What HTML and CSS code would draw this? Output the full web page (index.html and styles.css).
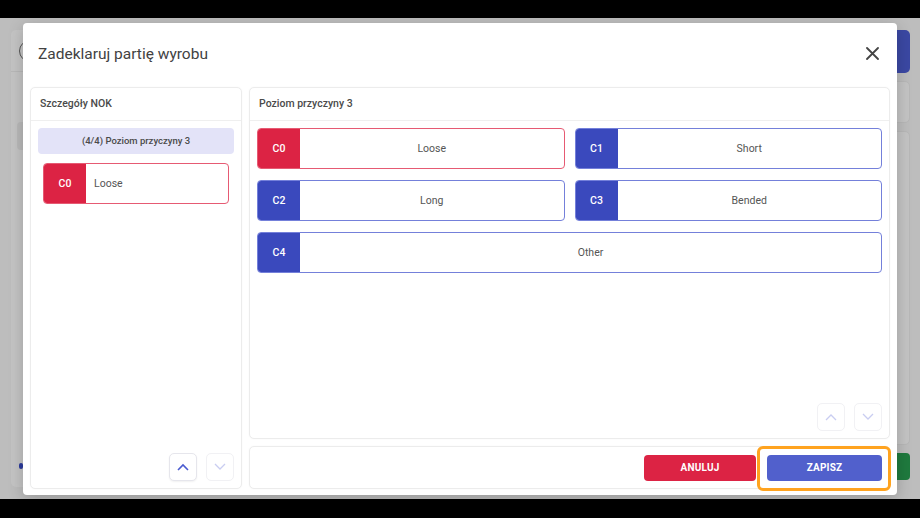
FILE: index.html
```html
<!DOCTYPE html>
<html lang="pl">
<head>
    <meta charset="UTF-8">
    <meta name="viewport" content="width=device-width, initial-scale=1.0">
    <title>Zadeklaruj partię wyrobu</title>
    <link rel="stylesheet" href="styles.css">
</head>
<body>
<div class="screen">

    <!-- aplikacja pod spodem (przyciemniona) -->
    <div class="app">
        <div class="app-left">
            <div class="app-head"><span class="app-circle"></span></div>
            <div class="app-chip"></div>
            <span class="app-dot"></span>
        </div>
        <div class="app-right">
            <div class="app-btn"></div>
            <div class="app-box small"></div>
            <div class="app-box big"></div>
            <div class="app-green"></div>
        </div>
    </div>

    <div class="modal">
        <div class="modal-header">
            <h1>Zadeklaruj partię wyrobu</h1>
            <button class="close-btn" aria-label="Zamknij">
                <svg width="13" height="13" viewBox="0 0 13 13"><path d="M1 1L12 12M12 1L1 12" stroke="#444" stroke-width="1.8" stroke-linecap="round"/></svg>
            </button>
        </div>

        <div class="modal-body">
            <div class="panel panel-left">
                <div class="panel-title">Szczegóły NOK</div>
                <div class="panel-content">
                    <div class="level-banner">(4/4) Poziom przyczyny 3</div>
                    <div class="cause selected left-align">
                        <span class="code">C0</span>
                        <span class="label">Loose</span>
                    </div>
                    <div class="arrows">
                        <button class="arrow active">
                            <svg width="12" height="8" viewBox="0 0 12 8"><polyline points="1,7 6,2 11,7" fill="none" stroke="#4a5bd0" stroke-width="1.6"/></svg>
                        </button>
                        <button class="arrow">
                            <svg width="12" height="8" viewBox="0 0 12 8"><polyline points="1,1 6,6 11,1" fill="none" stroke="#c9cdf1" stroke-width="1.3"/></svg>
                        </button>
                    </div>
                </div>
            </div>

            <div class="right-col">
                <div class="panel panel-right">
                    <div class="panel-title">Poziom przyczyny 3</div>
                    <div class="panel-content">
                        <div class="cause-grid">
                            <div class="cause selected"><span class="code">C0</span><span class="label">Loose</span></div>
                            <div class="cause"><span class="code">C1</span><span class="label">Short</span></div>
                            <div class="cause"><span class="code">C2</span><span class="label">Long</span></div>
                            <div class="cause"><span class="code">C3</span><span class="label">Bended</span></div>
                            <div class="cause wide"><span class="code">C4</span><span class="label">Other</span></div>
                        </div>
                        <div class="arrows">
                            <button class="arrow">
                                <svg width="12" height="8" viewBox="0 0 12 8"><polyline points="1,7 6,2 11,7" fill="none" stroke="#c9cdf1" stroke-width="1.3"/></svg>
                            </button>
                            <button class="arrow">
                                <svg width="12" height="8" viewBox="0 0 12 8"><polyline points="1,1 6,6 11,1" fill="none" stroke="#c9cdf1" stroke-width="1.3"/></svg>
                            </button>
                        </div>
                    </div>
                </div>

                <div class="panel footer">
                    <button class="btn btn-cancel">Anuluj</button>
                    <div class="save-wrap">
                        <button class="btn btn-save">Zapisz</button>
                        <span class="highlight"></span>
                    </div>
                </div>
            </div>
        </div>
    </div>
</div>
</body>
</html>
```

FILE: styles.css
```css
* {
    box-sizing: border-box;
}
html, body {
    margin: 0;
    padding: 0;
}
body {
    background: #000;
    font-family: Roboto, "Noto Sans", sans-serif;
    color: #444;
    height: 518px;
    padding-top: 18px;
    overflow: hidden;
}
button {
    font-family: inherit;
    border: none;
    background: none;
    padding: 0;
    cursor: pointer;
}

.screen {
    position: relative;
    height: 481px;
    background: #bdbdbd;
    overflow: hidden;
}

/* underlying page */
.app {
    display: flex;
    justify-content: space-between;
    height: 100%;
    padding: 12px 10px 12px 11px;
}
.app-left {
    position: relative;
    width: 300px;
    background: #c4c4c4;
    border-radius: 5px;
}
.app-head {
    height: 42px;
    border-bottom: 1px solid #b8b8b8;
    padding: 10px 8px;
}
.app-circle {
    display: block;
    width: 22px;
    height: 22px;
    border: 1.5px solid #555;
    border-radius: 50%;
}
.app-chip {
    margin: 50px 0 0 6px;
    width: 20px;
    height: 28px;
    background: #b9b9b9;
    border-radius: 4px;
}
.app-dot {
    position: absolute;
    left: 8px;
    bottom: 18px;
    width: 4px;
    height: 6px;
    background: #2b3a9c;
    border-radius: 2px;
}
.app-right {
    width: 200px;
    display: flex;
    flex-direction: column;
    gap: 8px;
}
.app-btn {
    height: 43px;
    background: #3b48a3;
    border-radius: 5px;
}
.app-box {
    background: #c4c4c4;
    border: 1px solid #b8b8b8;
    border-radius: 5px;
}
.app-box.small {
    height: 42px;
}
.app-box.big {
    flex: 1;
}
.app-green {
    height: 27px;
    background: #1f7a3e;
    border-radius: 4px;
    margin-bottom: 7px;
}

/* modal */
.modal {
    position: absolute;
    left: 23px;
    top: 5px;
    width: 874px;
    height: 472px;
    background: #fff;
    border-radius: 4px;
    box-shadow: 0 4px 16px rgba(0,0,0,0.2);
    display: flex;
    flex-direction: column;
    padding: 0 7px 6px 7px;
}
.modal-header {
    height: 64px;
    display: flex;
    align-items: center;
    justify-content: space-between;
    padding: 0 9px 3px 8px;
}
.modal-header h1 {
    margin: 0;
    font-size: 15.5px;
    font-weight: 400;
    color: #424242;
}
.close-btn {
    width: 18px;
    height: 18px;
    display: flex;
    align-items: center;
    justify-content: center;
}

.modal-body {
    flex: 1;
    display: grid;
    grid-template-columns: 212px 1fr;
    gap: 7px;
}
.panel {
    background: #fff;
    border: 1px solid #ececec;
    border-radius: 5px;
    box-shadow: 0 0 2px rgba(0,0,0,0.04);
}
.panel-left, .panel-right {
    display: flex;
    flex-direction: column;
}
.panel-title {
    height: 33px;
    line-height: 32px;
    padding-left: 9px;
    font-size: 10.5px;
    font-weight: 500;
    color: #4a4a4a;
    border-bottom: 1px solid #efefef;
}
.panel-content {
    flex: 1;
    display: flex;
    flex-direction: column;
    padding: 7px 7px 7px 7px;
}

.level-banner {
    height: 26px;
    line-height: 26px;
    background: #e3e3f8;
    border-radius: 4px;
    text-align: center;
    font-size: 9.5px;
    font-weight: 500;
    color: #4a4a4a;
    margin-bottom: 9px;
}
.panel-left .cause {
    margin: 0 5px;
}

.cause {
    height: 41px;
    display: flex;
    border: 1.5px solid #7480da;
    border-radius: 4px;
    overflow: hidden;
    background: #fff;
}
.cause .code {
    width: 42px;
    flex: none;
    background: #3a49bd;
    color: #fff;
    font-size: 10.5px;
    font-weight: 500;
    display: flex;
    align-items: center;
    justify-content: center;
}
.cause .label {
    flex: 1;
    display: flex;
    align-items: center;
    justify-content: center;
    font-size: 10.5px;
    color: #555;
}
.cause.selected {
    border-color: #e65a73;
}
.cause.selected .code {
    background: #dc2344;
}
.cause.left-align .label {
    justify-content: flex-start;
    padding-left: 8px;
}

.cause-grid {
    display: grid;
    grid-template-columns: 1fr 1fr;
    column-gap: 10px;
    row-gap: 11px;
}
.cause.wide {
    grid-column: span 2;
}

.arrows {
    margin-top: auto;
    display: flex;
    justify-content: flex-end;
    gap: 9px;
}
.arrow {
    width: 28px;
    height: 28px;
    border: 1px solid #f1f1f4;
    border-radius: 5px;
    display: flex;
    align-items: center;
    justify-content: center;
    background: #fff;
}
.arrow.active {
    border-color: #e6e6ec;
    box-shadow: 0 1px 2px rgba(0,0,0,0.06);
}

.right-col {
    display: grid;
    grid-template-rows: 1fr 43px;
    gap: 7px;
}
.footer {
    display: flex;
    justify-content: flex-end;
    align-items: center;
    gap: 11px;
    padding-right: 7px;
}
.btn {
    height: 26px;
    border-radius: 4px;
    color: #fff;
    font-size: 10px;
    font-weight: 700;
    text-transform: uppercase;
    letter-spacing: 0.2px;
}
.btn-cancel {
    width: 112px;
    background: #dc2344;
}
.save-wrap {
    position: relative;
}
.btn-save {
    width: 115px;
    background: #5160cc;
    display: block;
}
.highlight {
    position: absolute;
    left: -10px;
    right: -9px;
    top: -9px;
    bottom: -10px;
    border: 3px solid #ffa31f;
    border-radius: 6px;
    pointer-events: none;
}
```
